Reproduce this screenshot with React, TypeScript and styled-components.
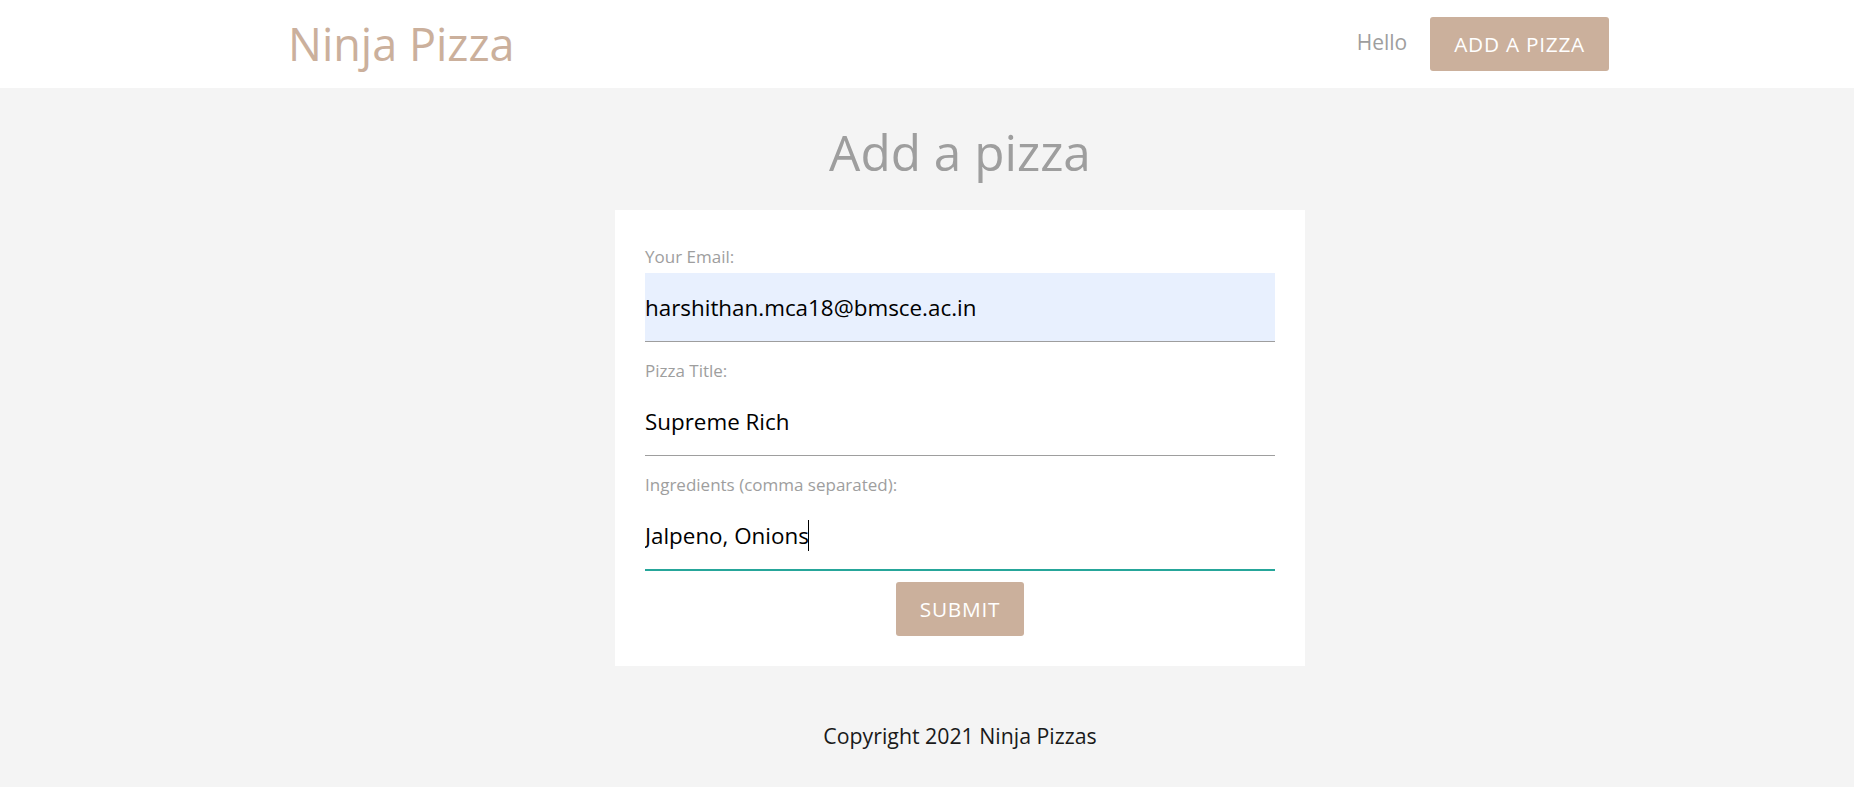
import React from 'react';
import styled, { createGlobalStyle } from 'styled-components';

const GlobalStyle = createGlobalStyle`
  html, body {
    margin: 0;
    padding: 0;
  }
  body {
    background: #f4f4f4;
    font-family: "Open Sans", "Noto Sans", sans-serif;
    color: rgba(0, 0, 0, 0.87);
    overflow-x: hidden;
    min-height: 100vh;
  }
  * {
    box-sizing: border-box;
  }
`;

const Frame = styled.div`
  width: 1920px;
`;

const Nav = styled.nav`
  background: #ffffff;
  height: 88px;
`;

const NavInner = styled.div`
  width: 1344px;
  margin: 0 auto;
  height: 100%;
  display: flex;
  align-items: center;
  justify-content: space-between;
`;

const Logo = styled.a`
  font-size: 45px;
  line-height: 88px;
  color: #cbb09c;
  text-decoration: none;
`;

const NavList = styled.ul`
  list-style: none;
  margin: 0;
  padding: 0 23px 0 0;
  display: flex;
  align-items: center;
  gap: 23px;
`;

const Greeting = styled.li`
  font-size: 21px;
  color: #9e9e9e;
  margin-bottom: 4px;
`;

const BrandButton = styled.button`
  display: inline-block;
  height: 54px;
  line-height: 54px;
  padding: 0 24px;
  border: none;
  border-radius: 3px;
  background: #cbb09c;
  color: #ffffff;
  font-family: inherit;
  font-size: 20.8px;
  letter-spacing: 0.75px;
  text-transform: uppercase;
  cursor: pointer;
`;

const Section = styled.section`
  width: 1344px;
  margin: 0 auto;
`;

const Title = styled.h4`
  margin: 36px 0 0;
  font-size: 49.5px;
  line-height: 56px;
  font-weight: 400;
  text-align: center;
  color: #9e9e9e;
`;

const Card = styled.form`
  width: 690px;
  margin: 30px auto;
  padding: 30px;
  background: #ffffff;
`;

const Field = styled.div`
  position: relative;
`;

const Label = styled.label`
  display: block;
  font-size: 17px;
  line-height: 33px;
  height: 33px;
  color: #9e9e9e;
`;

const TextInput = styled.input<{ $autofill?: boolean; $focused?: boolean }>`
  display: block;
  width: 100%;
  height: 69px;
  margin: 0 0 12px;
  padding: 0;
  border: none;
  border-bottom: 1px solid ${p => (p.$focused ? '#26a69a' : '#9e9e9e')};
  box-shadow: ${p => (p.$focused ? '0 1px 0 0 #26a69a' : 'none')};
  border-radius: 0;
  outline: none;
  background: ${p => (p.$autofill ? '#e8f0fe' : 'transparent')};
  font-family: inherit;
  font-size: 22.4px;
  color: #000000;
`;

const CaretLayer = styled.div`
  position: absolute;
  left: 0;
  top: 33px;
  height: 68px;
  display: flex;
  align-items: center;
  font-size: 22.4px;
  white-space: pre;
  color: transparent;
  pointer-events: none;
`;

const Caret = styled.span`
  display: inline-block;
  width: 1.5px;
  height: 31px;
  margin-left: -1px;
  background: #000000;
`;

const SubmitRow = styled.div`
  display: flex;
  justify-content: center;
`;

const Footer = styled.footer`
  padding: 22.5px 0;
  text-align: center;
  font-size: 21.3px;
  line-height: 34px;
  color: #1a1a1a;
`;

export default function App() {
  const ingredients = 'Jalpeno, Onions';
  return (
    <Frame>
      <GlobalStyle />
      <Nav>
        <NavInner>
          <Logo href="#">Ninja Pizza</Logo>
          <NavList>
            <Greeting>Hello</Greeting>
            <li>
              <BrandButton type="button">Add a Pizza</BrandButton>
            </li>
          </NavList>
        </NavInner>
      </Nav>
      <Section>
        <Title>Add a pizza</Title>
        <Card onSubmit={e => e.preventDefault()}>
          <Field>
            <Label>Your Email:</Label>
            <TextInput type="text" defaultValue="harshithan.mca18@bmsce.ac.in" $autofill />
          </Field>
          <Field>
            <Label>Pizza Title:</Label>
            <TextInput type="text" defaultValue="Supreme Rich" />
          </Field>
          <Field>
            <Label>Ingredients (comma separated):</Label>
            <TextInput type="text" defaultValue={ingredients} $focused />
            <CaretLayer>
              {ingredients}
              <Caret />
            </CaretLayer>
          </Field>
          <SubmitRow>
            <BrandButton type="submit">Submit</BrandButton>
          </SubmitRow>
        </Card>
      </Section>
      <Footer>Copyright 2021 Ninja Pizzas</Footer>
    </Frame>
  );
}
